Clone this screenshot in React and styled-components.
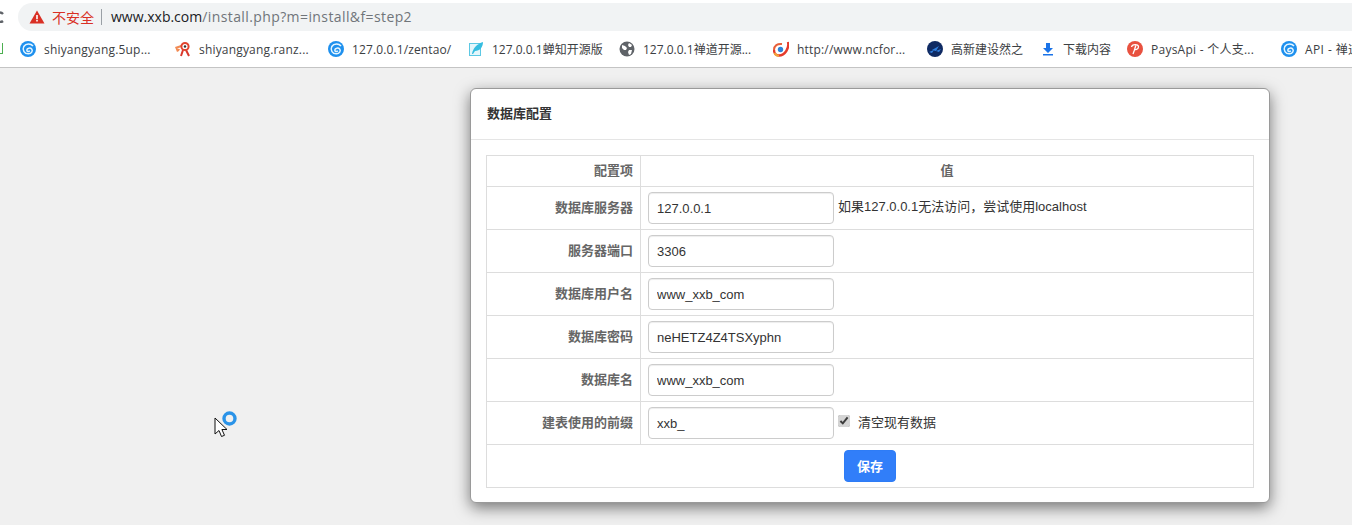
import React from 'react'
import styled, { createGlobalStyle } from 'styled-components'

const Global = createGlobalStyle`
  html, body { margin: 0; padding: 0; height: 525px; overflow: hidden; background: #f0f0f0; }
  body { font-family: "Liberation Sans", "Noto Sans CJK SC", sans-serif; }
  #root { height: 525px; }
`

const Page = styled.div`
  position: relative;
  width: 1352px;
  height: 525px;
  overflow: hidden;
  background: #f0f0f0;
`

const Chrome = styled.div`
  height: 67px;
  background: #fff;
  border-bottom: 1px solid #c4c4c4;
  overflow: hidden;
`

const AddressRow = styled.div`
  height: 31px;
  display: flex;
  align-items: flex-start;
  padding-top: 3px;
  box-sizing: border-box;
`

const ReloadStub = styled.div`
  width: 18px;
  height: 28px;
  flex: none;
  display: flex;
  align-items: center;
`

const Omnibox = styled.div`
  flex: 1;
  height: 28px;
  box-sizing: border-box;
  margin-right: -40px;
  border-radius: 14px;
  background: #f1f3f4;
  display: flex;
  align-items: center;
  padding: 0 0 1px 11px;
  font-family: "Open Sans", "Noto Sans CJK SC", sans-serif;
  font-size: 14px;
`

const Insecure = styled.span`
  color: #d93025;
  font-size: 14px;
  margin-left: 7px;
  font-family: "Noto Sans CJK SC", sans-serif;
`

const Divider = styled.span`
  width: 1px;
  height: 16px;
  background: #9aa0a6;
  margin: 0 9px 0 7px;
`

const Host = styled.span`
  color: #202124;
`

const UrlPath = styled.span`
  color: #70757a;
  letter-spacing: 0.4px;
`

const BookmarkBar = styled.div`
  height: 36px;
  display: flex;
  align-items: center;
  padding-left: 20px;
  white-space: nowrap;
  position: relative;
`

const Bookmark = styled.div`
  width: ${p => p.$w}px;
  flex: none;
  display: flex;
  align-items: center;
  gap: ${p => p.$gap || 8}px;
  font-family: "Open Sans", "Noto Sans CJK SC", sans-serif;
  font-size: 12px;
  letter-spacing: ${p => p.$ls || 0}px;
  color: #3c4043;
`

const FavSlot = styled.svg`
  width: 16px;
  height: 16px;
  flex: none;
`

const GreenStub = styled.div`
  position: absolute;
  left: 0;
  top: 12px;
  width: 3px;
  height: 11px;
  border-right: 1px solid #4caf50;
  border-bottom: 1px solid #4caf50;
  box-sizing: border-box;
`

const Panel = styled.section`
  width: 800px;
  height: 415px;
  margin: 20px 0 0 470px;
  box-sizing: border-box;
  background: #fff;
  border: 1px solid #9a9a9a;
  border-radius: 6px;
  box-shadow: 0 5px 15px rgba(0, 0, 0, 0.5);
`

const PanelHead = styled.header`
  height: 51px;
  box-sizing: border-box;
  padding: 0 15px 3px 16px;
  border-bottom: 1px solid #e5e5e5;
  display: flex;
  align-items: center;
  font-size: 13px;
  font-weight: 700;
  color: #333;
`

const PanelBody = styled.div`
  padding: 15px 15px 0 15px;
`

const Table = styled.table`
  width: 768px;
  border-collapse: collapse;
  table-layout: fixed;
  font-size: 13px;
  color: #333;
`

const Cell = styled.td`
  border: 1px solid #ddd;
  padding: 0 7px;
  height: ${p => p.$h || 42}px;
  box-sizing: border-box;
  text-align: ${p => p.$align || 'left'};
  vertical-align: middle;
`

const LabelCell = styled(Cell)`
  padding: 0 7px 3px 0;
  text-align: right;
  font-weight: 700;
  color: #666;
`

const HeadCell = styled(Cell)`
  padding-bottom: 3px;
  text-align: center;
  font-weight: 700;
  color: #666;
`

const FieldRow = styled.div`
  display: flex;
  align-items: center;
`

const Input = styled.input`
  width: 186px;
  height: 32px;
  box-sizing: border-box;
  padding: 0 8px;
  border: 1px solid #ccc;
  border-radius: 4px;
  background: #fff;
  font-family: inherit;
  font-size: 13px;
  color: #333;
  outline: none;
  box-shadow: inset 0 1px 1px rgba(0, 0, 0, 0.075);
`

const Hint = styled.span`
  margin-left: 4px;
  font-size: 13px;
  color: #333;
  position: relative;
  top: -3px;
`

const CheckLabel = styled.label`
  display: flex;
  align-items: center;
  margin-left: 4px;
  font-size: 13px;
  color: #333;
  position: relative;
  top: -2px;
`

const Check = styled.input`
  width: 12px;
  height: 12px;
  margin: 0 8px 0 0;
  accent-color: #d4d4d4;
`

const SaveButton = styled.button`
  width: 52px;
  height: 32px;
  border: 1px solid #2e7cf6;
  border-radius: 4px;
  background: #317ef9;
  color: #fff;
  font-family: inherit;
  font-size: 13px;
  font-weight: 700;
  padding: 0 0 2px;
`

const BusyCursor = styled.svg`
  position: absolute;
  left: 212px;
  top: 408px;
  width: 28px;
  height: 32px;
`

function Fengxin() {
  return (
    <FavSlot viewBox="0 0 16 16">
      <circle cx="8" cy="8" r="8" fill="#1e90ee" />
      <path d="M13 5C11 2.5 6 2 3.8 5.5 2 9 4.5 13 8.5 12.8 11.5 12.6 13 10 11.8 8.2 10.5 6.5 7 6.8 6.8 9 6.7 10.5 8.8 11 9.8 9.8" fill="none" stroke="#e6f6ff" strokeWidth="1.5" />
    </FavSlot>
  )
}

function Ranzhi() {
  return (
    <FavSlot viewBox="0 0 16 16">
      <path d="M0 6l6-2v2l-4 2 3 0-1 2-2 1z" fill="#f28b54" />
      <path d="M6 15l2-6M14 15l-3-6" fill="none" stroke="#d9382c" strokeWidth="2" />
      <circle cx="10" cy="5.5" r="3.6" fill="none" stroke="#e2452f" strokeWidth="2" />
      <circle cx="10" cy="5.5" r="1.2" fill="#333" />
    </FavSlot>
  )
}

function Feather() {
  return (
    <FavSlot viewBox="0 0 16 16">
      <rect x="1.5" y="2.5" width="11" height="12" fill="#e4f6fb" stroke="#5cc8e4" />
      <path d="M4 13C5 7 9 3 15 1c0 5-3 9-8 9l-2 3z" fill="#35bde0" />
    </FavSlot>
  )
}

function Globe() {
  return (
    <FavSlot viewBox="0 0 16 16">
      <circle cx="8" cy="8" r="7.5" fill="#5f6368" />
      <path d="M3 4l3 1 2 2-1 2-2 0-2-2zM10 2l3 2-1 2-2 0-1-2zM10 9l3 0-1 4-2 1-1-3z" fill="#fff" />
    </FavSlot>
  )
}

function Ncfor() {
  return (
    <FavSlot viewBox="0 0 16 16">
      <path d="M15 1C16.5 7 12 14.5 6 14.5 3 14.5 1 12 1 9" fill="none" stroke="#e53b2c" strokeWidth="2.4" />
      <path d="M1 9C1 4.5 4.5 2.5 9 3" fill="none" stroke="#e8603a" strokeWidth="2" />
      <path d="M1.5 12C2.5 14 4 14.8 6 14.6" fill="none" stroke="#f2a33a" strokeWidth="2" />
      <circle cx="7.5" cy="8.5" r="2.7" fill="#2d83d8" />
    </FavSlot>
  )
}

function Gaoxin() {
  return (
    <FavSlot viewBox="0 0 16 16">
      <circle cx="8" cy="8" r="8" fill="#0f2a63" />
      <path d="M2 11l5-2-2 3zM5 9l7-4-3 5zM9 10l5-2-2 3z" fill="#2f7fe0" />
    </FavSlot>
  )
}

function Download() {
  return (
    <FavSlot viewBox="0 0 16 16">
      <path d="M6 2h4v5h3l-5 5-5-5h3zM3 13h10v1.6H3z" fill="#1a73e8" />
    </FavSlot>
  )
}

function PaysApi() {
  return (
    <FavSlot viewBox="0 0 16 16">
      <circle cx="8" cy="8" r="8" fill="#e8513f" />
      <path d="M4.5 6C5 3 11.5 2.8 11.5 5.8 11.5 8.5 8 9 7 8.5M8.8 4.5C8 7.5 7.2 10 6 13" fill="none" stroke="#fff" strokeWidth="1.3" />
    </FavSlot>
  )
}

const bookmarks = [
  { w: 155, icon: <Fengxin />, text: 'shiyangyang.5up...', ls: 0.18 },
  { w: 153, icon: <Ranzhi />, text: 'shiyangyang.ranz...', ls: 0.18 },
  { w: 140, icon: <Fengxin />, text: '127.0.0.1/zentao/', ls: 0.12 },
  { w: 151, icon: <Feather />, text: '127.0.0.1蝉知开源版' },
  { w: 154, icon: <Globe />, text: '127.0.0.1禅道开源...' },
  { w: 154, icon: <Ncfor />, text: 'http://www.ncfor...', ls: 0.18 },
  { w: 113, icon: <Gaoxin />, text: '高新建设然之' },
  { w: 87, icon: <Download />, text: '下载内容', gap: 7 },
  { w: 154, icon: <PaysApi />, text: 'PaysApi - 个人支...', ls: 0.25 },
  { w: 90, icon: <Fengxin />, text: 'API - 禅道', ls: 0.4 },
]

const rows = [
  { label: '数据库服务器', value: '127.0.0.1', hint: '如果127.0.0.1无法访问，尝试使用localhost' },
  { label: '服务器端口', value: '3306' },
  { label: '数据库用户名', value: 'www_xxb_com' },
  { label: '数据库密码', value: 'neHETZ4Z4TSXyphn' },
  { label: '数据库名', value: 'www_xxb_com' },
  { label: '建表使用的前缀', value: 'xxb_', clear: true },
]

export default function App() {
  return (
    <Page>
      <Global />
      <Chrome>
        <AddressRow>
          <ReloadStub>
            <svg width="4" height="12" viewBox="0 0 4 12">
              <path d="M0 1.5a4.5 4.5 0 0 1 3 1.5M3 10a4.5 4.5 0 0 1-3 1" fill="none" stroke="#5f6368" strokeWidth="2.4" />
            </svg>
          </ReloadStub>
          <Omnibox>
            <svg width="16" height="14" viewBox="0 0 16 14">
              <path d="M8 0.5L15.5 13.5H0.5z" fill="#d93025" />
              <path d="M7.2 5h1.6v4.2H7.2zM7.2 10h1.6v1.6H7.2z" fill="#fff" />
            </svg>
            <Insecure>不安全</Insecure>
            <Divider />
            <Host>www.xxb.com</Host>
            <UrlPath>/install.php?m=install&amp;f=step2</UrlPath>
          </Omnibox>
        </AddressRow>
        <BookmarkBar>
          <GreenStub />
          {bookmarks.map(b => (
            <Bookmark key={b.text} $w={b.w} $gap={b.gap} $ls={b.ls}>
              {b.icon}
              <span>{b.text}</span>
            </Bookmark>
          ))}
        </BookmarkBar>
      </Chrome>

      <Panel>
        <PanelHead>数据库配置</PanelHead>
        <PanelBody>
          <Table>
            <colgroup>
              <col width="154" />
              <col />
            </colgroup>
            <tbody>
              <tr>
                <LabelCell as="th" $h={31}>配置项</LabelCell>
                <HeadCell as="th" $h={31}>值</HeadCell>
              </tr>
              {rows.map(r => (
                <tr key={r.label}>
                  <LabelCell as="th" $h={43}>{r.label}</LabelCell>
                  <Cell $h={43}>
                    <FieldRow>
                      <Input defaultValue={r.value} />
                      {r.hint && <Hint>{r.hint}</Hint>}
                      {r.clear && (
                        <CheckLabel>
                          <Check type="checkbox" defaultChecked />
                          清空现有数据
                        </CheckLabel>
                      )}
                    </FieldRow>
                  </Cell>
                </tr>
              ))}
              <tr>
                <Cell colSpan={2} $h={43} $align="center">
                  <SaveButton>保存</SaveButton>
                </Cell>
              </tr>
            </tbody>
          </Table>
        </PanelBody>
      </Panel>

      <BusyCursor viewBox="0 0 28 32">
        <path d="M3 10v16l4-3.5 2.5 6 3-1.2-2.6-5.8H15z" fill="#fff" stroke="#111" strokeWidth="1" />
        <circle cx="17.5" cy="10.5" r="5.5" fill="none" stroke="#2a93e8" strokeWidth="3.4" />
      </BusyCursor>
    </Page>
  )
}
